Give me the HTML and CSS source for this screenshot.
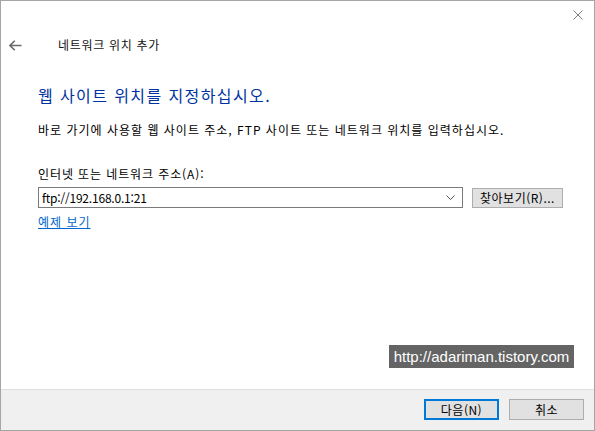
FILE: index.html
```html
<!DOCTYPE html>
<html lang="ko">
<head>
<meta charset="utf-8">
<link rel="stylesheet" href="styles.css">
</head>
<body>
<div class="window">
  <div class="titlebar">
    <svg class="close" width="10" height="10" viewBox="0 0 10 10"><path d="M0.5 0.5 L9.5 9.5 M9.5 0.5 L0.5 9.5" stroke="#7a7a7a" stroke-width="1" fill="none"/></svg>
  </div>
  <div class="header">
    <svg class="back" width="13" height="11" viewBox="0 0 13 11"><path d="M1 5.5 H12.5 M5.8 0.8 L1 5.5 L5.8 10.2" stroke="#6a6a6a" stroke-width="1.6" fill="none"/></svg>
    <span class="title">네트워크 위치 추가</span>
  </div>
  <div class="main">
    <h1 class="heading">웹 사이트 위치를 지정하십시오.</h1>
    <p class="desc">바로 가기에 사용할 웹 사이트 주소, FTP 사이트 또는 네트워크 위치를 입력하십시오.</p>
    <div class="label">인터넷 또는 네트워크 주소(A):</div>
    <div class="row">
      <div class="combo">
        <span class="value">ftp://192.168.0.1:21</span>
        <svg class="chev" width="9" height="5" viewBox="0 0 9 5"><path d="M0.5 0.5 L4.5 4.5 L8.5 0.5" stroke="#555" stroke-width="1" fill="none"/></svg>
      </div>
      <button class="btn browse">찾아보기(R)...</button>
    </div>
    <a class="link" href="#">예제 보기</a>
  </div>
  <div class="footer">
    <button class="btn primary">다음(N)</button>
    <button class="btn">취소</button>
  </div>
  <div class="watermark">http://adariman.tistory.com</div>
</div>
</body>
</html>
```
FILE: styles.css
```css
html, body {
  margin: 0;
  padding: 0;
  background: #fff;
}
body {
  font-family: "Noto Sans CJK KR", "Noto Sans", sans-serif;
  font-size: 12px;
  color: #000;
}
.window {
  position: relative;
  width: 595px;
  height: 431px;
  box-sizing: border-box;
  border: 1px solid #a6a6a6;
  display: flex;
  flex-direction: column;
  background: #fff;
}
.titlebar {
  height: 30px;
  display: flex;
  justify-content: flex-end;
  align-items: flex-start;
}
.close {
  margin-top: 9px;
  margin-right: 11px;
}
.header {
  height: 28px;
  display: flex;
  align-items: center;
}
.back {
  margin-left: 8px;
}
.title {
  margin-left: 36px;
  line-height: 16px;
  letter-spacing: 0.7px;
  color: #111;
}
.main {
  flex: 1;
  padding-left: 37px;
  display: flex;
  flex-direction: column;
  align-items: flex-start;
}
.heading {
  margin: 24px 0 0;
  font-size: 16px;
  font-weight: normal;
  line-height: 24px;
  letter-spacing: 1.4px;
  color: #0033a0;
}
.desc {
  margin: 15px 0 0;
  line-height: 16px;
  letter-spacing: 1px;
}
.label {
  margin-top: 28px;
  line-height: 16px;
  letter-spacing: 0.9px;
}
.row {
  margin-top: 5px;
  display: flex;
  align-items: flex-start;
}
.combo {
  width: 425px;
  height: 21px;
  box-sizing: border-box;
  border: 1px solid #7a7a7a;
  display: flex;
  align-items: center;
  justify-content: space-between;
  padding: 0 7px 0 3px;
}
.value {
  line-height: 16px;
  letter-spacing: -0.2px;
}
.btn {
  font-family: "Noto Sans CJK KR", "Noto Sans", sans-serif;
  font-size: 12px;
  line-height: 16px;
  color: #000;
  background: #e1e1e1;
  border: 1px solid #adadad;
  padding: 0;
  box-sizing: border-box;
  width: 75px;
  height: 21px;
  letter-spacing: 0.5px;
}
.browse {
  margin-left: 9px;
  margin-top: 1px;
  width: 91px;
  height: 20px;
}
.link {
  margin-top: 6px;
  line-height: 16px;
  letter-spacing: 1px;
  color: #0066cc;
  text-decoration: underline;
}
.footer {
  height: 41px;
  box-sizing: border-box;
  border-top: 1px solid #dfdfdf;
  background: #f0f0f0;
  display: flex;
  justify-content: flex-end;
  align-items: flex-start;
  gap: 10px;
  padding: 9px 10px 0 0;
}
.primary {
  border: 2px solid #0078d7;
}
.watermark {
  position: absolute;
  left: 388px;
  top: 344px;
  width: 185px;
  height: 23px;
  background: #646464;
  color: #fff;
  font-family: "Liberation Sans", sans-serif;
  font-size: 15px;
  line-height: 23px;
  text-align: center;
}
```
